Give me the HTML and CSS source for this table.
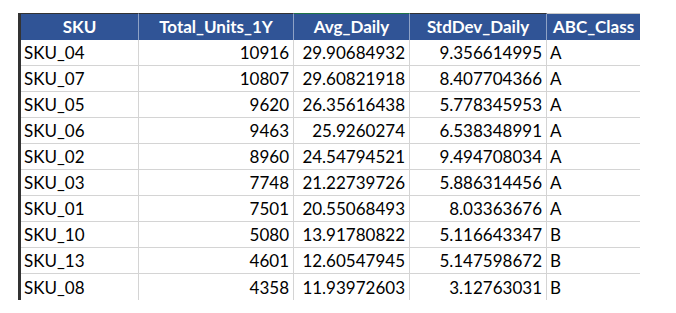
FILE: index.html
```html
<!DOCTYPE html>
<html lang="en">
<head>
  <meta charset="UTF-8">
  <title>SKU ABC classes</title>
  <link rel="stylesheet" href="styles.css">
</head>
<body>
  <div class="sheet">
    <table class="grid">
      <thead>
        <tr>
          <th class="c-sku">SKU</th>
          <th class="c-total">Total_Units_1Y</th>
          <th class="c-avg sel">Avg_Daily</th>
          <th class="c-std">StdDev_Daily</th>
          <th class="c-abc light">ABC_Class</th>
        </tr>
      </thead>
      <tbody id="rows"></tbody>
    </table>
  </div>

<script>
  // Data
  const rows = [
    ['SKU_04',10916,'29.90684932','9.356614995','A'],
    ['SKU_07',10807,'29.60821918','8.407704366','A'],
    ['SKU_05',9620,'26.35616438','5.778345953','A'],
    ['SKU_06',9463,'25.9260274','6.538348991','A'],
    ['SKU_02',8960,'24.54794521','9.494708034','A'],
    ['SKU_03',7748,'21.22739726','5.886314456','A'],
    ['SKU_01',7501,'20.55068493','8.03363676','A'],
    ['SKU_10',5080,'13.91780822','5.116643347','B'],
    ['SKU_13',4601,'12.60547945','5.147598672','B'],
    ['SKU_08',4358,'11.93972603','3.12763031','B']
  ];
  const tb = document.getElementById('rows');
  rows.forEach(r=>{
    const tr=document.createElement('tr');
    tr.innerHTML = `<td>${r[0]}</td><td class="num">${r[1]}</td><td class="num">${r[2]}</td><td class="num">${r[3]}</td><td>${r[4]}</td>`;
    tb.appendChild(tr);
  });
</script>
</body>
</html>
```

FILE: styles.css
```css
* { margin:0; padding:0; box-sizing:border-box; }
body { background:#fff; font-family: Lato, 'Open Sans', sans-serif; color:#000; }
.sheet { padding:13px 0 0 18px; }
.grid { border-collapse:separate; border-spacing:0; table-layout:fixed; border-left:3px solid #333; }
/* header */
.grid th { background:#305496; color:#fff; font-weight:700; font-size:17px; height:27px; line-height:26px; text-align:center; border-top:1px solid #333; border-right:1px solid #8ea2c6; padding:0 3px; white-space:nowrap; }
.grid th.sel { border-top-color:#217346; }
.grid th.light { border-top-color:#c8c8c8; border-right:none; }
.c-sku { width:118px; }
.c-total { width:155px; }
.c-avg { width:116px; }
.c-std { width:137px; }
.c-abc { width:93px; }
/* body */
.grid td { font-size:17px; height:26px; line-height:25px; padding:0 3px; border-right:1px solid #d4d4d4; border-bottom:1px solid #d4d4d4; white-space:nowrap; }
.grid td:last-child { border-right:none; }
.grid tr:last-child td { border-bottom:none; }
.grid td.num { text-align:right; padding-right:4px; }
```
